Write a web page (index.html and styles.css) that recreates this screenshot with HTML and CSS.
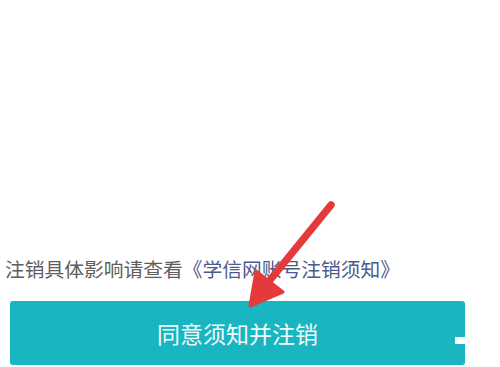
FILE: index.html
```html
<!DOCTYPE html>
<html lang="zh-CN">
  <head>
    <meta charset="UTF-8" />
    <meta name="viewport" content="width=device-width, initial-scale=1.0" />
    <title>注销账号</title>
    <link rel="stylesheet" href="styles.css">
  </head>
  <body>
    <div class="page">
      <p class="notice">
        注销具体影响请查看<a href="#" class="notice-link">《学信网账号注销须知》</a>
      </p>
      <button type="button" class="confirm">同意须知并注销</button>
    </div>

    <svg class="arrow" width="500" height="367" viewBox="0 0 500 367">
      <line x1="331" y1="205" x2="266" y2="285" stroke="#e53a3b" stroke-width="7.5" stroke-linecap="round" />
      <polygon points="250,306 256,271 283,292" fill="#e53a3b" stroke="#e53a3b" stroke-width="3" stroke-linejoin="round" />
    </svg>
    <div class="mark"></div>
  </body>
</html>
```

FILE: styles.css
```css
body {
  margin: 0;
  padding: 0;
  background: #fff;
  font-family: "Noto Sans CJK SC", "Noto Sans", sans-serif;
}
.page {
  height: 367px;
  display: flex;
  flex-direction: column;
  justify-content: flex-end;
  padding: 0 35px 2px 5px;
  box-sizing: border-box;
}
.notice {
  margin: 0 0 18px 0;
  font-size: 19.75px;
  line-height: 28px;
  color: #5e5e5e;
  white-space: nowrap;
}
.notice-link {
  color: #4b5b8c;
  text-decoration: none;
}
.confirm {
  margin-left: 5px;
  height: 64px;
  border: none;
  border-radius: 3px;
  background: #19b6c1;
  color: #f2fbfc;
  font-family: inherit;
  font-size: 23px;
  letter-spacing: 0;
  cursor: pointer;
}
.arrow {
  position: absolute;
  top: 0;
  left: 0;
  pointer-events: none;
}
.mark {
  position: absolute;
  left: 455px;
  top: 337px;
  width: 14px;
  height: 7px;
  background: #fff;
}
```
